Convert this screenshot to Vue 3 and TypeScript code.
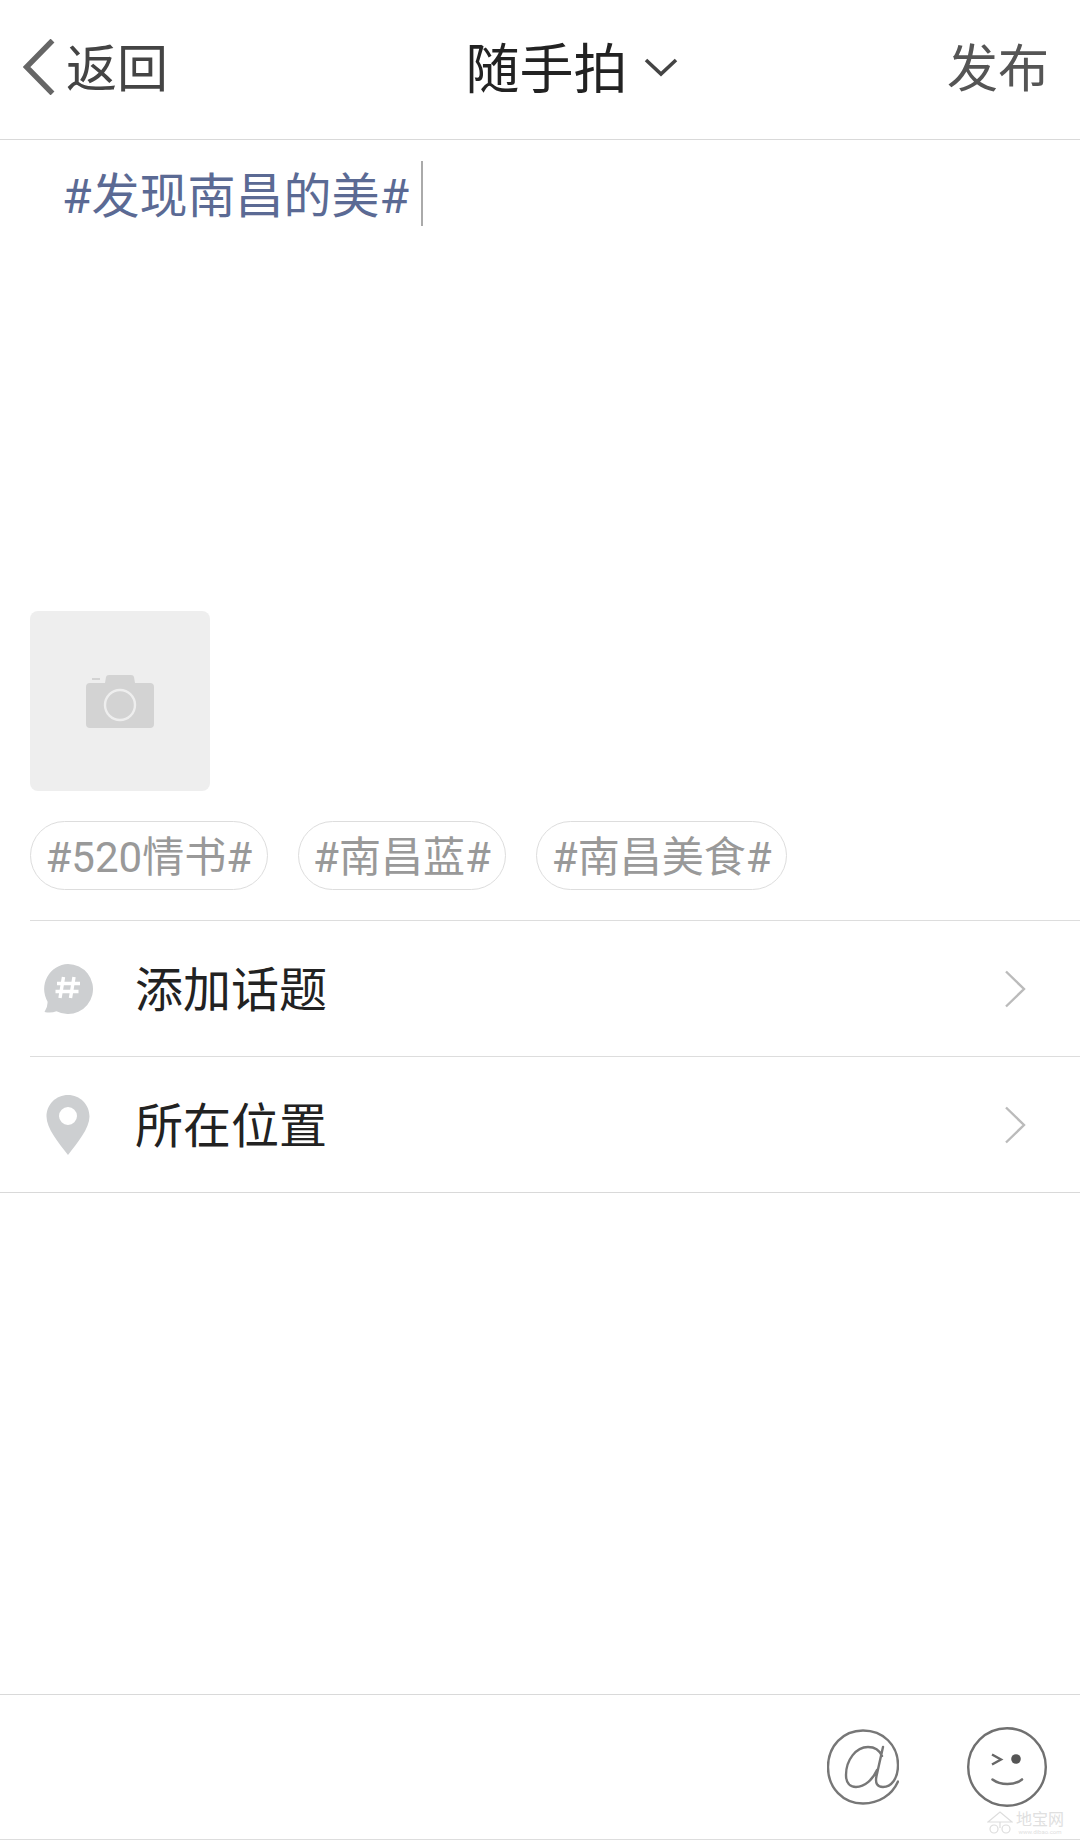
<script setup lang="ts">
const chips = ['#520情书#', '#南昌蓝#', '#南昌美食#'];
</script>

<template>
  <div class="page">
    <header class="topbar">
      <div class="back">
        <svg class="back-arrow" width="32" height="56" viewBox="0 0 32 56">
          <path d="M29.500 1.500 3.500 28l26 26.500" fill="none" stroke="#666" stroke-width="5.400" />
        </svg>
        <span>返回</span>
      </div>
      <div class="title">
        <span>随手拍</span>
        <svg class="title-arrow" width="34" height="20" viewBox="0 0 34 20">
          <path d="M2 3l15 14L32 3" fill="none" stroke="#444" stroke-width="3.600" />
        </svg>
      </div>
      <div class="publish">发布</div>
    </header>

    <section class="editor">
      <span class="topic">#发现南昌的美#</span>
      <span class="caret"></span>
    </section>

    <div class="photo">
      <svg width="68" height="53" viewBox="0 0 68 53">
        <path d="M19 8l1-6q.3-2 3-2h22q2.700 0 3 2l1 6h15q4 0 4 4v37q0 4-4 4H4q-4 0-4-4V12q0-4 4-4z" fill="#d3d3d3" />
        <rect x="6" y="3" width="8" height="2" fill="#d3d3d3" />
        <circle cx="34" cy="30" r="15" fill="none" stroke="#eee" stroke-width="2.400" />
      </svg>
    </div>

    <div class="chips">
      <span v-for="chip in chips" :key="chip" class="chip">{{ chip }}</span>
    </div>

    <div class="list">
      <div class="row">
        <svg class="row-icon" width="50" height="50" viewBox="0 0 50 50">
          <path d="M25 0a25 25 0 1 1-11.500 47.200Q8 49.500 1.500 48q3.500-5 3-10.500A25 25 0 0 1 25 0z" fill="#cdcfd1" />
          <path d="M20.500 13l-3.500 21M31 13l-3.500 21M14 19.500h23M12.500 27.500h23" fill="none" stroke="#fff" stroke-width="3.400" />
        </svg>
        <span class="row-label">添加话题</span>
        <svg class="row-arrow" width="22" height="38" viewBox="0 0 22 38">
          <path d="M2 1.500 20 19 2 36.500" fill="none" stroke="#bbb" stroke-width="2.400" />
        </svg>
      </div>
      <div class="row">
        <svg class="row-icon" width="50" height="60" viewBox="0 0 50 60">
          <path fill-rule="evenodd" d="M25 0c12 0 21.500 9.500 21.500 21.500 0 12-12 26-21.500 38.500C15.500 47.500 3.500 33.500 3.500 21.500 3.500 9.500 13 0 25 0zm0 12a9 9 0 1 0 0 18 9 9 0 0 0 0-18z" fill="#cdcfd1" />
        </svg>
        <span class="row-label">所在位置</span>
        <svg class="row-arrow" width="22" height="38" viewBox="0 0 22 38">
          <path d="M2 1.500 20 19 2 36.500" fill="none" stroke="#bbb" stroke-width="2.400" />
        </svg>
      </div>
    </div>

    <footer class="toolbar">
      <svg class="tool-at" width="72" height="76" viewBox="0 0 72 76">
        <path d="M71 52.500C65 66 52 74.500 36 74.500 16 74.500 1 59 1 38 1 17 16 1.500 36 1.500S71 16 71 36c0 14-7 22-15 22-6 0-8-4-6.500-11L56 18M55 27C52 20 47 18 41 18 29 18 19 31 19 46c0 8 4 12 10 12 9 0 17-8 21-17" fill="none" stroke="#777" stroke-width="2.400" stroke-linecap="round" />
      </svg>
      <svg class="tool-face" width="80" height="80" viewBox="0 0 80 80">
        <circle cx="40" cy="40" r="38.800" fill="none" stroke="#707070" stroke-width="2.400" />
        <path d="M25 27.500l9 5-9 5" fill="none" stroke="#666" stroke-width="2.400" />
        <circle cx="49" cy="32" r="4.800" fill="#555" />
        <path d="M25.500 52.500c8 6 22 6 29.500 0" fill="none" stroke="#707070" stroke-width="2.600" stroke-linecap="round" />
      </svg>
      <div class="watermark">
        <svg width="26" height="24" viewBox="0 0 26 24">
          <path d="M1 11 13 1l12 10zM13 11v6M3 18a4 4 0 1 0 8 0 4 4 0 0 0-8 0zM15 18a4 4 0 1 0 8 0 4 4 0 0 0-8 0z" fill="none" stroke="#ddd" stroke-width="1.200" />
        </svg>
        <div class="watermark-text">
          <span class="watermark-name">地宝网</span>
          <span class="watermark-url">www.dibao.com</span>
        </div>
      </div>
    </footer>
  </div>
</template>

<style>
html, body { margin: 0; background: #fff; }
</style>

<style scoped>
.page {
  width: 1080px;
  height: 1840px;
  display: flex;
  flex-direction: column;
  position: relative;
  overflow: hidden;
  background: #fff;
  font-family: Roboto, "Noto Sans CJK SC", sans-serif;
}
.topbar {
  height: 140px;
  box-sizing: border-box;
  flex: none;
  display: flex;
  align-items: center;
  justify-content: space-between;
  padding: 0 31px 9px 23px;
  border-bottom: 1px solid #d9d9d9;
}
.back { display: flex; align-items: center; gap: 11px; font-size: 51px; color: #444; }
.back-arrow { margin-top: 3px; }
.title { display: flex; align-items: center; gap: 16px; margin-left: 28px; font-size: 54px; color: #222; }
.title-arrow { margin-top: 4px; }
.publish { font-size: 51px; color: #555; }
.editor {
  height: 471px;
  flex: none;
  box-sizing: border-box;
  padding: 21px 0 0 62px;
  display: flex;
  align-items: flex-start;
}
.topic { margin-top: 4px; font-size: 48px; line-height: 64px; color: #5b6a94; }
.caret { width: 2px; height: 65px; margin-left: 12px; background: #aaa; }
.photo {
  width: 180px;
  height: 180px;
  flex: none;
  margin-left: 30px;
  display: flex;
  align-items: center;
  justify-content: center;
  background: #eee;
  border-radius: 8px;
}
.chips { display: flex; gap: 30px; margin: 30px 0 30px 30px; flex: none; }
.chip {
  height: 69px;
  box-sizing: border-box;
  display: flex;
  align-items: center;
  padding: 0 14.500px 4px;
  border: 1px solid #ddd;
  border-radius: 35px;
  font-size: 42px;
  color: #999;
}
.list { flex: none; border-bottom: 1px solid #d9d9d9; }
.row {
  height: 136px;
  box-sizing: border-box;
  margin-left: 30px;
  padding-left: 13px;
  padding-right: 54px;
  display: flex;
  align-items: center;
  border-top: 1px solid #ddd;
}
.row-icon { flex: none; }
.row-label { margin-left: 42px; padding-bottom: 6px; flex: 1; font-size: 48px; color: #222; }
.toolbar {
  margin-top: auto;
  height: 146px;
  box-sizing: border-box;
  flex: none;
  position: relative;
  display: flex;
  align-items: center;
  justify-content: flex-end;
  padding-right: 33px;
  border-top: 1px solid #d9d9d9;
  border-bottom: 1px solid #ddd;
}
.tool-at { margin-right: 68px; }
.watermark {
  position: absolute;
  right: 16px;
  bottom: 4px;
  display: flex;
  align-items: center;
  gap: 3px;
  color: #e0e0e0;
}
.watermark-text { display: flex; flex-direction: column; align-items: center; }
.watermark-name { font-size: 16px; line-height: 17px; }
.watermark-url { font-size: 6px; line-height: 7px; }
</style>
